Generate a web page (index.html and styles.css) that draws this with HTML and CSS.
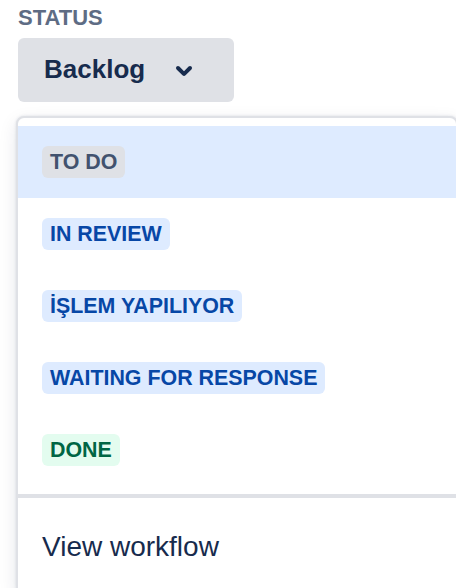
FILE: index.html
```html
<!DOCTYPE html>
<html lang="tr">
<head>
<meta charset="utf-8">
<title>Status</title>
<link rel="stylesheet" href="styles.css">
</head>
<body>
<div class="field">
  <div class="label">STATUS</div>
  <button class="trigger" type="button">
    <span class="trigger-text">Backlog</span>
    <svg class="chevron" viewBox="0 0 24 24" width="48" height="48" aria-hidden="true">
      <path fill="#172B4D" d="M8.292 10.293a1.009 1.009 0 000 1.419l2.939 2.965c.218.215.5.322.779.322s.556-.107.769-.322l2.93-2.955a1.01 1.01 0 000-1.419.987.987 0 00-1.406 0l-2.298 2.317-2.307-2.327a.99.99 0 00-1.406 0z"/>
    </svg>
  </button>
  <div class="menu">
    <ul class="options">
      <li class="option is-active"><span class="lozenge lozenge-grey">TO DO</span></li>
      <li class="option"><span class="lozenge lozenge-blue">IN REVIEW</span></li>
      <li class="option"><span class="lozenge lozenge-blue">İŞLEM YAPILIYOR</span></li>
      <li class="option"><span class="lozenge lozenge-blue">WAITING FOR RESPONSE</span></li>
      <li class="option"><span class="lozenge lozenge-green">DONE</span></li>
    </ul>
    <div class="footer">
      <div class="footer-item">View workflow</div>
    </div>
  </div>
</div>
</body>
</html>
```

FILE: styles.css
```css
html, body {
  margin: 0;
  padding: 0;
  background: #ffffff;
}

body {
  font-family: "Liberation Sans", Arial, sans-serif;
  color: #172B4D;
  overflow: hidden;
}

.field {
  padding: 4px 0 0 18px;
}

.label {
  font-size: 22px;
  line-height: 28px;
  font-weight: 700;
  color: #5E6C84;
}

.trigger {
  margin-top: 6px;
  display: flex;
  align-items: center;
  gap: 15px;
  height: 64px;
  width: 216px;
  padding: 0 25px 3px 26px;
  box-sizing: border-box;
  border: 0;
  border-radius: 6px;
  background: #DFE1E6;
  font-family: inherit;
  cursor: pointer;
}

.trigger-text {
  font-size: 26px;
  line-height: 32px;
  font-weight: 700;
  color: #172B4D;
}

.chevron {
  display: block;
  flex: none;
  margin-top: 3px;
}

.menu {
  margin: 14px 0 0 -2px;
  width: 442px;
  height: 480px;
  box-sizing: border-box;
  border: 2px solid #DFE1E6;
  border-radius: 8px;
  background: #ffffff;
  box-shadow: 0 6px 18px rgba(9, 30, 66, 0.10), 0 0 3px rgba(9, 30, 66, 0.12);
}

.options {
  list-style: none;
  margin: 0;
  padding: 8px 0;
}

.option {
  height: 72px;
  display: flex;
  align-items: center;
  padding-left: 24px;
}

.option.is-active {
  background: #DEEBFF;
}

.lozenge {
  display: inline-block;
  height: 32px;
  line-height: 32px;
  padding: 0 8px;
  border-radius: 6px;
  font-size: 21.4px;
  font-weight: 700;
}

.lozenge-grey {
  background: #DFE1E6;
  color: #42526E;
}

.lozenge-blue {
  background: #DEEBFF;
  color: #0747A6;
}

.lozenge-green {
  background: #E3FCEF;
  color: #006644;
}

.footer {
  border-top: 4px solid #DFE1E6;
}

.footer-item {
  padding: 31px 0 0 24px;
  font-size: 28px;
  line-height: 36px;
  color: #172B4D;
}
```
